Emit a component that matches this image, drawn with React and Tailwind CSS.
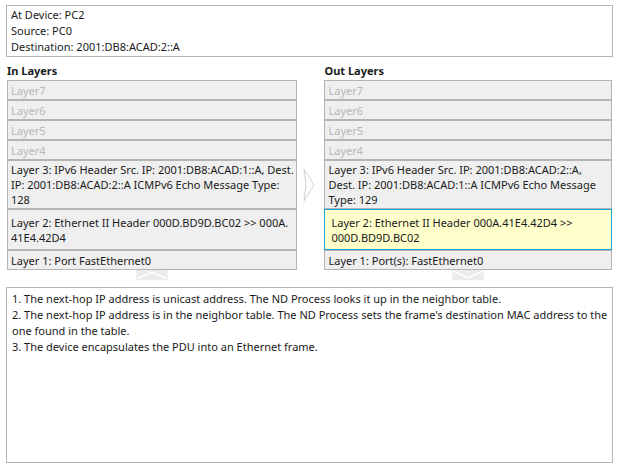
import React from 'react';

const font = { fontFamily: '"Noto Sans", "Open Sans", sans-serif' };

function Row({ children, dim, active, h = 'h-[20px]' }) {
  if (active) {
    return (
      <div className={'flex items-center border border-[#1aa3d9] bg-[#ffffcc] pl-[6px] leading-[15px] text-[#1a1a1a] ' + h}>
        <div>{children}</div>
      </div>
    );
  }
  return (
    <div
      className={
        'flex items-center border border-[#b4b4b4] bg-[#efefef] pl-[3px] leading-[15px] ' +
        h +
        ' ' +
        (dim ? 'text-[#b8b8b8]' : 'text-[#1a1a1a]')
      }
    >
      <div>{children}</div>
    </div>
  );
}

function Notch({ down }) {
  return (
    <svg width="32" height="10" viewBox="0 0 32 10">
      <rect x="0" y="0" width="32" height="10" fill="#ececec" />
      {down ? (
        <polyline points="1,1 16,8 31,1" fill="none" stroke="#ffffff" strokeWidth="1.5" />
      ) : (
        <polyline points="1,9 16,2 31,9" fill="none" stroke="#ffffff" strokeWidth="1.5" />
      )}
    </svg>
  );
}

export default function App() {
  return (
    <div className="w-[618px] h-[467px] bg-white text-[11px] text-[#1a1a1a] pt-[5px] px-[6px]" style={font}>
      {/* device info */}
      <div className="w-[607px] h-[52px] border border-[#b4b4b4] px-[4px] pt-[1px] leading-[16px]">
        <div>At Device: PC2</div>
        <div>Source: PC0</div>
        <div>Destination: 2001:DB8:ACAD:2::A</div>
      </div>

      <div className="flex mt-[5px] pl-[1px]">
        {/* in layers */}
        <div className="w-[290px] flex flex-col">
          <div className="font-bold leading-[17px] h-[18px]">In Layers</div>
          <Row dim>Layer7</Row>
          <Row dim>Layer6</Row>
          <Row dim>Layer5</Row>
          <Row dim>Layer4</Row>
          <Row h="h-[49px]">
            Layer 3: IPv6 Header Src. IP: 2001:DB8:ACAD:1::A, Dest. IP: 2001:DB8:ACAD:2::A ICMPv6 Echo Message Type:
            128
          </Row>
          <Row h="h-[41px]">Layer 2: Ethernet II Header 000D.BD9D.BC02 &gt;&gt; 000A. 41E4.42D4</Row>
          <Row>Layer 1: Port FastEthernet0</Row>
          <div className="flex justify-center">
            <Notch />
          </div>
        </div>

        {/* arrow */}
        <div className="w-[28px] flex justify-center pt-[106px] pr-[2px]">
          <svg width="12" height="34" viewBox="0 0 12 34">
            <polygon points="1,1 11,17 1,33 3,17" fill="#ffffff" stroke="#d2d2d2" strokeWidth="1" strokeLinejoin="round" />
          </svg>
        </div>

        {/* out layers */}
        <div className="w-[288px] flex flex-col">
          <div className="font-bold leading-[17px] h-[18px]">Out Layers</div>
          <Row dim>Layer7</Row>
          <Row dim>Layer6</Row>
          <Row dim>Layer5</Row>
          <Row dim>Layer4</Row>
          <Row h="h-[49px]">
            Layer 3: IPv6 Header Src. IP: 2001:DB8:ACAD:2::A, Dest. IP: 2001:DB8:ACAD:1::A ICMPv6 Echo Message Type:
            129
          </Row>
          <Row active h="h-[41px]">
            Layer 2: Ethernet II Header 000A.41E4.42D4 &gt;&gt; 000D.BD9D.BC02
          </Row>
          <Row>Layer 1: Port(s): FastEthernet0</Row>
          <div className="flex justify-center">
            <Notch down />
          </div>
        </div>
      </div>

      {/* process description */}
      <div className="w-[607px] h-[176px] mt-[7px] border border-[#b4b4b4] pl-[5px] pt-[3px] leading-[16px]">
        <div>1. The next-hop IP address is unicast address. The ND Process looks it up in the neighbor table.</div>
        <div>
          2. The next-hop IP address is in the neighbor table. The ND Process sets the frame's destination MAC address to the
          one found in the table.
        </div>
        <div>3. The device encapsulates the PDU into an Ethernet frame.</div>
      </div>
    </div>
  );
}
